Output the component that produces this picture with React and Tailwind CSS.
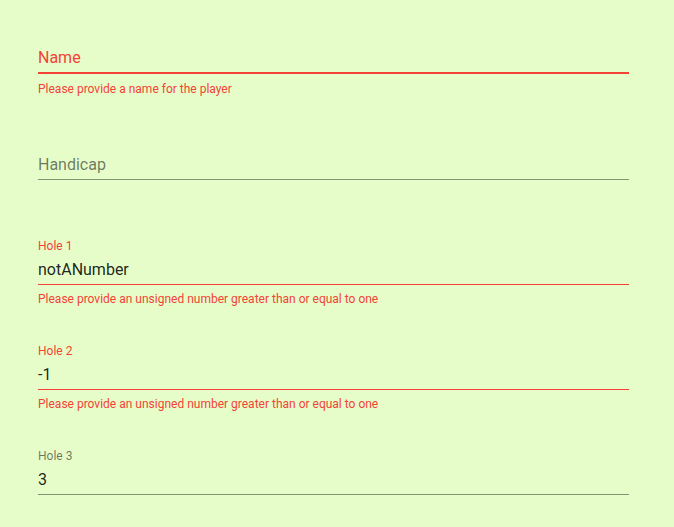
import React from "react";

const RED = "text-[#f44336]";

function Field({ label, value, helper, error, shrink = true, thick = false }) {
  const labelColor = error ? "text-[#f44336]" : "text-[rgba(0,0,0,0.54)]";
  const border = error
    ? thick
      ? "border-b-2 border-[#f44336]"
      : "border-b border-[#f44336]"
    : "border-b border-[rgba(0,0,0,0.42)]";
  return (
    <div className="flex flex-col w-[591px]">
      <div className={`h-[16px] text-[12px] leading-[16px] ${labelColor}`}>
        {shrink ? label : ""}
      </div>
      <div className={`mt-[6px] pb-[5px] ${border}`}>
        <div
          className={`h-[19px] text-[16px] leading-[19px] whitespace-nowrap ${
            shrink ? "text-[rgba(0,0,0,0.87)]" : labelColor
          }`}
        >
          {shrink ? value : label}
        </div>
      </div>
      <div
        className={`${thick ? "mt-[7px]" : "mt-[6px]"} h-[16px] text-[12px] leading-[16px] ${RED}`}
      >
        {helper}
      </div>
    </div>
  );
}

export default function App() {
  return (
    <div
      className="min-h-[527px] w-full bg-[#e6fdca] pt-[26px] pl-[38px]"
      style={{ fontFamily: "Roboto, 'Liberation Sans', sans-serif" }}
    >
      <div className="flex flex-col gap-[36px]">
        <Field
          label="Name"
          shrink={false}
          error
          thick
          helper="Please provide a name for the player"
        />
        <Field label="Handicap" shrink={false} />
        <Field
          label="Hole 1"
          value="notANumber"
          error
          helper="Please provide an unsigned number greater than or equal to one"
        />
        <Field
          label="Hole 2"
          value="-1"
          error
          helper="Please provide an unsigned number greater than or equal to one"
        />
        <Field label="Hole 3" value="3" />
      </div>
    </div>
  );
}
